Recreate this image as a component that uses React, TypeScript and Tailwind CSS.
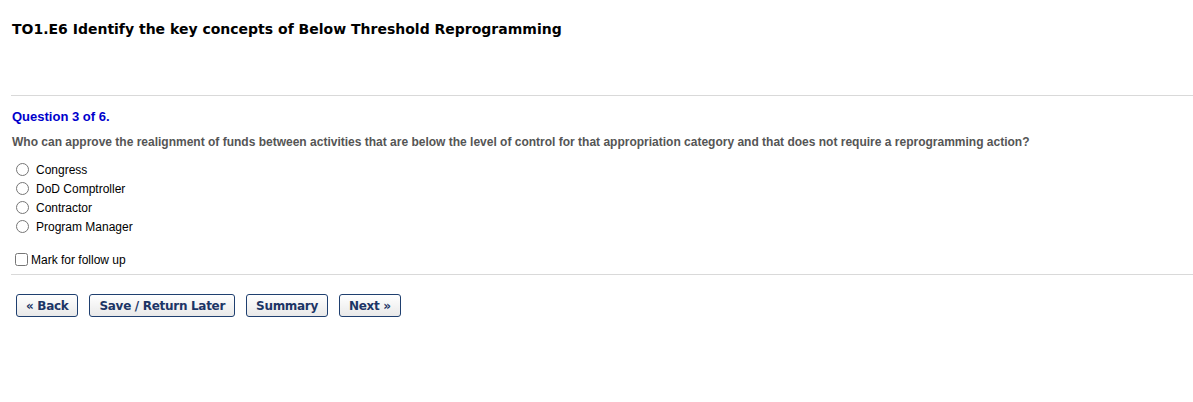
import React, { useState } from 'react';

const options = ['Congress', 'DoD Comptroller', 'Contractor', 'Program Manager'];

const NavButton: React.FC<{ children: React.ReactNode }> = ({ children }) => (
  <button
    type="button"
    className="h-[23px] rounded-[3px] border border-[#1f3f6f] bg-gradient-to-b from-white to-[#e9e9e9] px-[9px] text-[12px] leading-none font-bold tracking-[-0.3px] text-[#1c3566] [font-family:Verdana,'DejaVu_Sans',sans-serif]"
  >
    {children}
  </button>
);

const App: React.FC = () => {
  const [answer, setAnswer] = useState<string | null>(null);
  const [follow, setFollow] = useState(false);

  return (
    <div className="min-h-[402px] bg-white pl-[11px] [font-family:Arial,'Liberation_Sans',sans-serif]">
      <div className="flex h-[96px] items-start border-b border-[#d9d9d9] pt-[19px]">
        <h1 className="pl-px text-[14px] font-bold text-black [font-family:Verdana,'DejaVu_Sans',sans-serif]">
          TO1.E6 Identify the key concepts of Below Threshold Reprogramming
        </h1>
      </div>

      <div className="pt-[13px] pl-px">
        <h2 className="text-[13px] leading-[15px] font-bold text-[#0000cc]">Question 3 of 6.</h2>
        <p className="mt-[11px] text-[12px] leading-[14px] font-bold text-[#555555]">
          Who can approve the realignment of funds between activities that are below the level of control for that
          appropriation category and that does not require a reprogramming action?
        </p>

        <div className="mt-[11px] flex flex-col">
          {options.map(opt => (
            <label key={opt} className="flex h-[19px] items-center text-[12px] text-black">
              <input
                type="radio"
                name="answer"
                checked={answer === opt}
                onChange={() => setAnswer(opt)}
                className="ml-[4px] mr-[7px] h-[13px] w-[13px]"
              />
              {opt}
            </label>
          ))}
        </div>

        <label className="mt-[14px] flex h-[19px] items-center text-[12px] text-black">
          <input
            type="checkbox"
            checked={follow}
            onChange={() => setFollow(!follow)}
            className="ml-[3px] mr-[3px] h-[13px] w-[13px]"
          />
          Mark for follow up
        </label>
      </div>

      <div className="mt-[5px] border-t border-[#d9d9d9] pt-[19px] pl-[5px]">
        <div className="flex gap-[11px]">
          <NavButton>« Back</NavButton>
          <NavButton>Save / Return Later</NavButton>
          <NavButton>Summary</NavButton>
          <NavButton>Next »</NavButton>
        </div>
      </div>
    </div>
  );
};

export default App;
